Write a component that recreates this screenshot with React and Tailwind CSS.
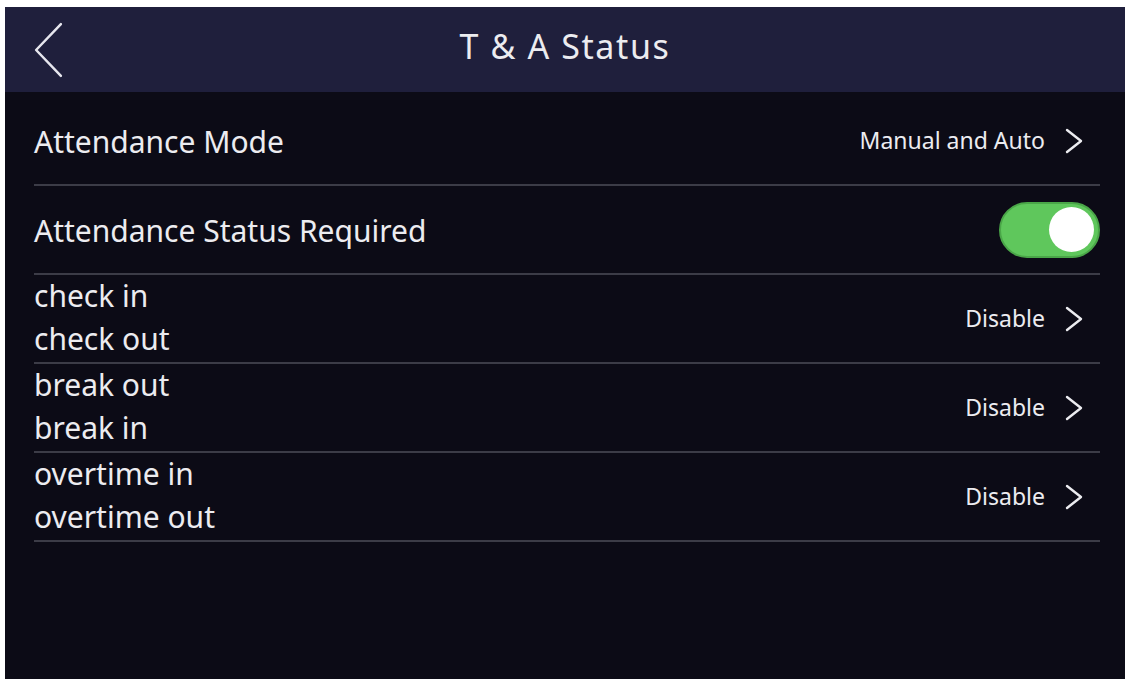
import { useState } from "react";

const FONT = { fontFamily: '"Noto Sans", "Open Sans", sans-serif' };

const ROWS = [
  { kind: "link", lines: ["Attendance Mode"], value: "Manual and Auto" },
  { kind: "toggle", lines: ["Attendance Status Required"] },
  { kind: "link", lines: ["check in", "check out"], value: "Disable" },
  { kind: "link", lines: ["break out", "break in"], value: "Disable" },
  { kind: "link", lines: ["overtime in", "overtime out"], value: "Disable" },
];

function Chevron({ dir = "right", className }) {
  const d = dir === "right" ? "M2 2 L16 13 L2 24" : "M27 2 L3 27 L27 52";
  const vb = dir === "right" ? "0 0 18 26" : "0 0 30 54";
  return (
    <svg viewBox={vb} className={className} fill="none" stroke="currentColor" strokeWidth="2.4" strokeLinecap="round" strokeLinejoin="round">
      <path d={d} />
    </svg>
  );
}

function Toggle({ on, onChange }) {
  return (
    <button
      onClick={() => onChange(!on)}
      className={`flex h-[56px] w-[101px] items-center rounded-full border-2 px-[4px] ${
        on ? "justify-end border-[#4aa648] bg-[#5fc75c]" : "justify-start border-[#555] bg-[#3a3a44]"
      }`}
    >
      <span className="h-[45px] w-[45px] rounded-full bg-white" />
    </button>
  );
}

export default function App() {
  const [required, setRequired] = useState(true);

  return (
    <div className="h-[682px] w-[1126px] bg-white pb-[3px] pl-[5px] pr-[1px] pt-[7px]" style={FONT}>
      <div className="flex h-full flex-col bg-[#0c0b16] text-[#ececf0]">
        {/* Title bar */}
        <div className="relative flex h-[85px] items-center justify-center bg-[#1f1f3c] pb-[7px]">
          <Chevron dir="left" className="absolute left-[28px] top-[15px] h-[56px] w-[31px] text-[#e6e6ee]" />
          <h1 className="text-[34px] leading-none tracking-[1.6px]">T &amp; A Status</h1>
        </div>

        {/* Settings list */}
        <div className="flex flex-col pl-[29px] pr-[25px] pt-[5px]">
          {ROWS.map((row, i) => (
            <div key={i} className="flex h-[89px] items-center justify-between border-b-2 border-[#3c3c47]">
              <div className={`flex flex-col text-[30px] leading-[43px] ${row.lines.length > 1 ? "pb-[4px]" : "pt-[2px]"}`}>
                {row.lines.map((l) => (
                  <span key={l}>{l}</span>
                ))}
              </div>
              {row.kind === "toggle" ? (
                <Toggle on={required} onChange={setRequired} />
              ) : (
                <div className="flex items-center gap-[20px] pr-[17px]">
                  <span className="text-[23px]">{row.value}</span>
                  <Chevron className="h-[26px] w-[18px]" />
                </div>
              )}
            </div>
          ))}
        </div>
      </div>
    </div>
  );
}
